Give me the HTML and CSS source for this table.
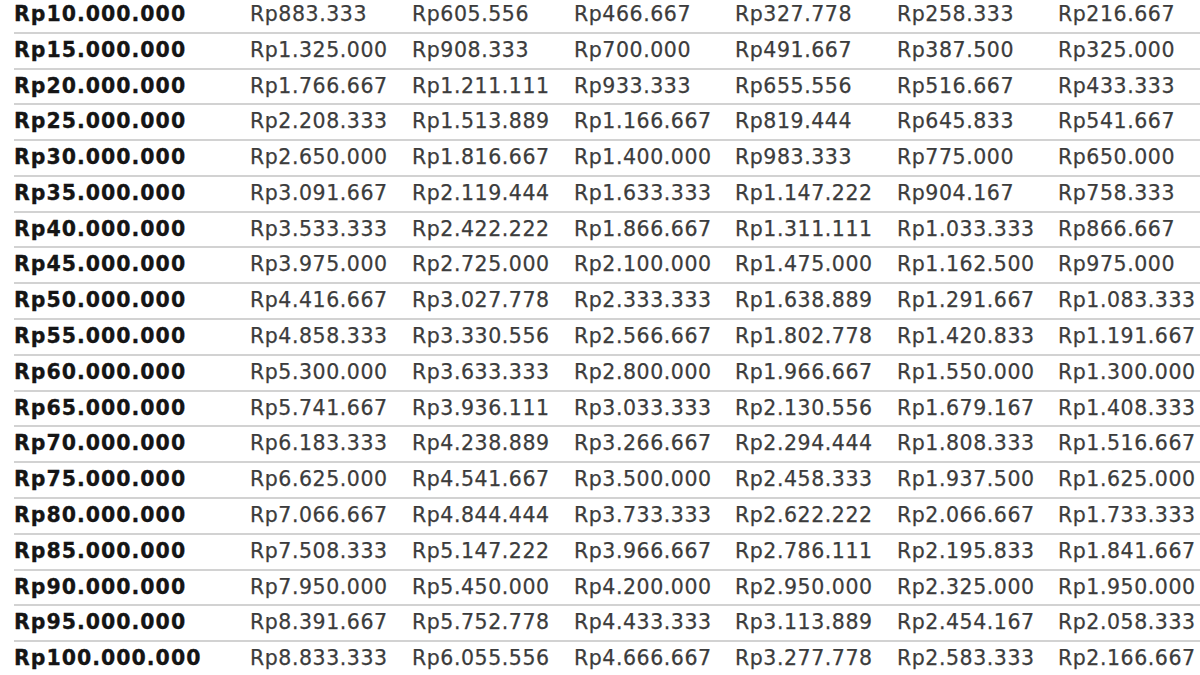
FILE: index.html
```html
<!DOCTYPE html>
<html lang="id">
<head>
<meta charset="utf-8">
<title>Tabel Angsuran</title>
<link rel="stylesheet" href="styles.css">
</head>
<body>
<div class="table">
  <div class="row"><span class="amt">Rp10.000.000</span><span>Rp883.333</span><span>Rp605.556</span><span>Rp466.667</span><span>Rp327.778</span><span>Rp258.333</span><span>Rp216.667</span></div>
  <div class="row"><span class="amt">Rp15.000.000</span><span>Rp1.325.000</span><span>Rp908.333</span><span>Rp700.000</span><span>Rp491.667</span><span>Rp387.500</span><span>Rp325.000</span></div>
  <div class="row"><span class="amt">Rp20.000.000</span><span>Rp1.766.667</span><span>Rp1.211.111</span><span>Rp933.333</span><span>Rp655.556</span><span>Rp516.667</span><span>Rp433.333</span></div>
  <div class="row"><span class="amt">Rp25.000.000</span><span>Rp2.208.333</span><span>Rp1.513.889</span><span>Rp1.166.667</span><span>Rp819.444</span><span>Rp645.833</span><span>Rp541.667</span></div>
  <div class="row"><span class="amt">Rp30.000.000</span><span>Rp2.650.000</span><span>Rp1.816.667</span><span>Rp1.400.000</span><span>Rp983.333</span><span>Rp775.000</span><span>Rp650.000</span></div>
  <div class="row"><span class="amt">Rp35.000.000</span><span>Rp3.091.667</span><span>Rp2.119.444</span><span>Rp1.633.333</span><span>Rp1.147.222</span><span>Rp904.167</span><span>Rp758.333</span></div>
  <div class="row"><span class="amt">Rp40.000.000</span><span>Rp3.533.333</span><span>Rp2.422.222</span><span>Rp1.866.667</span><span>Rp1.311.111</span><span>Rp1.033.333</span><span>Rp866.667</span></div>
  <div class="row"><span class="amt">Rp45.000.000</span><span>Rp3.975.000</span><span>Rp2.725.000</span><span>Rp2.100.000</span><span>Rp1.475.000</span><span>Rp1.162.500</span><span>Rp975.000</span></div>
  <div class="row"><span class="amt">Rp50.000.000</span><span>Rp4.416.667</span><span>Rp3.027.778</span><span>Rp2.333.333</span><span>Rp1.638.889</span><span>Rp1.291.667</span><span>Rp1.083.333</span></div>
  <div class="row"><span class="amt">Rp55.000.000</span><span>Rp4.858.333</span><span>Rp3.330.556</span><span>Rp2.566.667</span><span>Rp1.802.778</span><span>Rp1.420.833</span><span>Rp1.191.667</span></div>
  <div class="row"><span class="amt">Rp60.000.000</span><span>Rp5.300.000</span><span>Rp3.633.333</span><span>Rp2.800.000</span><span>Rp1.966.667</span><span>Rp1.550.000</span><span>Rp1.300.000</span></div>
  <div class="row"><span class="amt">Rp65.000.000</span><span>Rp5.741.667</span><span>Rp3.936.111</span><span>Rp3.033.333</span><span>Rp2.130.556</span><span>Rp1.679.167</span><span>Rp1.408.333</span></div>
  <div class="row"><span class="amt">Rp70.000.000</span><span>Rp6.183.333</span><span>Rp4.238.889</span><span>Rp3.266.667</span><span>Rp2.294.444</span><span>Rp1.808.333</span><span>Rp1.516.667</span></div>
  <div class="row"><span class="amt">Rp75.000.000</span><span>Rp6.625.000</span><span>Rp4.541.667</span><span>Rp3.500.000</span><span>Rp2.458.333</span><span>Rp1.937.500</span><span>Rp1.625.000</span></div>
  <div class="row"><span class="amt">Rp80.000.000</span><span>Rp7.066.667</span><span>Rp4.844.444</span><span>Rp3.733.333</span><span>Rp2.622.222</span><span>Rp2.066.667</span><span>Rp1.733.333</span></div>
  <div class="row"><span class="amt">Rp85.000.000</span><span>Rp7.508.333</span><span>Rp5.147.222</span><span>Rp3.966.667</span><span>Rp2.786.111</span><span>Rp2.195.833</span><span>Rp1.841.667</span></div>
  <div class="row"><span class="amt">Rp90.000.000</span><span>Rp7.950.000</span><span>Rp5.450.000</span><span>Rp4.200.000</span><span>Rp2.950.000</span><span>Rp2.325.000</span><span>Rp1.950.000</span></div>
  <div class="row"><span class="amt">Rp95.000.000</span><span>Rp8.391.667</span><span>Rp5.752.778</span><span>Rp4.433.333</span><span>Rp3.113.889</span><span>Rp2.454.167</span><span>Rp2.058.333</span></div>
  <div class="row"><span class="amt">Rp100.000.000</span><span>Rp8.833.333</span><span>Rp6.055.556</span><span>Rp4.666.667</span><span>Rp3.277.778</span><span>Rp2.583.333</span><span>Rp2.166.667</span></div>
</div>
</body>
</html>
```
FILE: styles.css
```css
html, body {
  margin: 0;
  padding: 0;
  background: #ffffff;
  overflow: hidden;
}

.table {
  margin-top: -2.1px;
  display: flex;
  flex-direction: column;
}

.row {
  display: grid;
  grid-template-columns: 236px 162px 162px 161px 162px 161px 1fr;
  margin-left: 14px;
  height: 35.8px;
  box-sizing: border-box;
  border-bottom: 2px solid #d2d2d2;
  line-height: 33.8px;
  font-family: "DejaVu Sans", Verdana, sans-serif;
  font-size: 20.5px;
  letter-spacing: 0.55px;
  color: #3c3c3c;
  -webkit-text-stroke: 0.25px #3c3c3c;
  white-space: nowrap;
}

.row:last-child {
  border-bottom-color: transparent;
}

.amt {
  font-weight: bold;
  letter-spacing: 1px;
  color: #151515;
  -webkit-text-stroke: 0.3px #151515;
}
```
